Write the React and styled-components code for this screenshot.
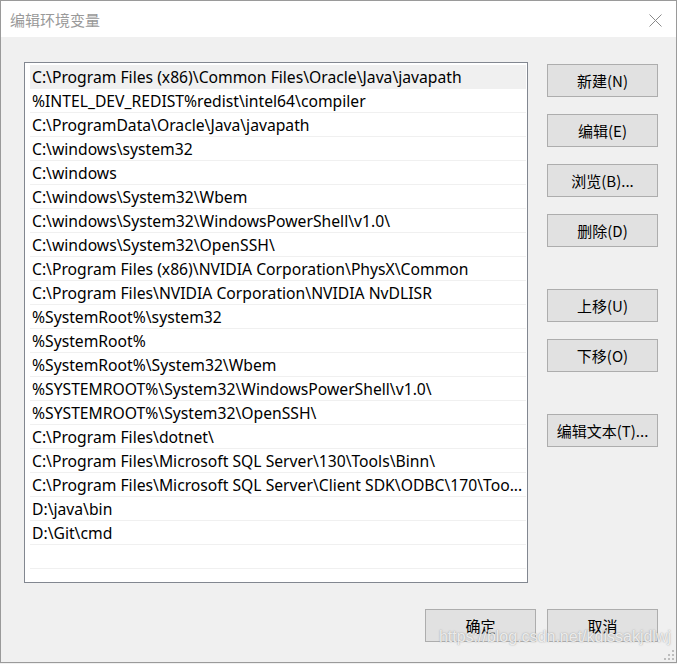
import React from "react";
import styled, { createGlobalStyle } from "styled-components";

const Global = createGlobalStyle`
  html, body { margin: 0; padding: 0; background: #f0f0f0; }
  body { font-family: "Noto Sans", "Noto Sans CJK SC", sans-serif; }
  * { box-sizing: border-box; }
`;

const Window = styled.div`
  position: relative;
  width: 677px;
  height: 663px;
  border: 1px solid #9a9a9a;
  background: #f0f0f0;
  display: flex;
  flex-direction: column;
  overflow: hidden;
`;

const TitleBar = styled.div`
  height: 36px;
  background: #ffffff;
  display: flex;
  align-items: center;
  justify-content: space-between;
  padding: 0 14px 0 9px;
  flex-shrink: 0;
`;

const Title = styled.div`
  font-family: "Noto Sans CJK SC", sans-serif;
  font-size: 15px;
  color: #999999;
  margin-top: 1px;
`;

const CloseIcon = styled.svg`
  width: 13px;
  height: 13px;
  display: block;
  margin-top: 2px;
`;

const Body = styled.div`
  flex: 1;
  display: grid;
  grid-template-columns: 504px 111px;
  grid-template-rows: 521px 33px;
  column-gap: 19px;
  row-gap: 26px;
  padding: 25px 0 0 23px;
`;

const ListBox = styled.div`
  border: 1px solid #828790;
  background: #ffffff;
  padding: 2px 1px 0 5px;
  overflow: hidden;
`;

const Row = styled.div`
  height: 24px;
  line-height: 24px;
  border-bottom: 1px solid #f0f0f0;
  background: ${(p) => (p.$selected ? "#f0f0f0" : "transparent")};
  padding-left: 2px;
  font-family: "Noto Sans", "Noto Sans CJK SC", sans-serif;
  font-size: 15.7px;
  color: #000000;
  white-space: nowrap;
  overflow: hidden;
`;

const SideColumn = styled.div`
  display: flex;
  flex-direction: column;
  padding-top: 2px;
`;

const Group = styled.div`
  display: flex;
  flex-direction: column;
  gap: 17px;
  margin-bottom: ${(p) => p.$after || 0}px;
`;

const Button = styled.button`
  width: 111px;
  height: 33px;
  background: #e1e1e1;
  border: 1px solid #adadad;
  border-radius: 0;
  padding: 0;
  font-family: "Noto Sans CJK SC", sans-serif;
  font-size: 15px;
  color: #000000;
  display: flex;
  align-items: center;
  justify-content: center;
`;

const Footer = styled.div`
  grid-column: 1 / span 2;
  display: flex;
  justify-content: flex-end;
  gap: 11px;
`;

const Watermark = styled.div`
  position: absolute;
  right: 5px;
  bottom: 16px;
  font-family: "Liberation Sans", Arial, sans-serif;
  font-size: 16px;
  color: rgba(255, 255, 255, 0.8);
  text-shadow: 0 0 1px rgba(120, 120, 120, 0.55), 0 0 2px rgba(150, 150, 150, 0.45);
  pointer-events: none;
`;

const Grip = styled.svg`
  position: absolute;
  right: 1px;
  bottom: 1px;
  width: 11px;
  height: 11px;
`;

const paths = [
  "C:\\Program Files (x86)\\Common Files\\Oracle\\Java\\javapath",
  "%INTEL_DEV_REDIST%redist\\intel64\\compiler",
  "C:\\ProgramData\\Oracle\\Java\\javapath",
  "C:\\windows\\system32",
  "C:\\windows",
  "C:\\windows\\System32\\Wbem",
  "C:\\windows\\System32\\WindowsPowerShell\\v1.0\\",
  "C:\\windows\\System32\\OpenSSH\\",
  "C:\\Program Files (x86)\\NVIDIA Corporation\\PhysX\\Common",
  "C:\\Program Files\\NVIDIA Corporation\\NVIDIA NvDLISR",
  "%SystemRoot%\\system32",
  "%SystemRoot%",
  "%SystemRoot%\\System32\\Wbem",
  "%SYSTEMROOT%\\System32\\WindowsPowerShell\\v1.0\\",
  "%SYSTEMROOT%\\System32\\OpenSSH\\",
  "C:\\Program Files\\dotnet\\",
  "C:\\Program Files\\Microsoft SQL Server\\130\\Tools\\Binn\\",
  "C:\\Program Files\\Microsoft SQL Server\\Client SDK\\ODBC\\170\\Too...",
  "D:\\java\\bin",
  "D:\\Git\\cmd",
  "",
  "",
];

export default function App() {
  return (
    <>
      <Global />
      <Window>
        <TitleBar>
          <Title>编辑环境变量</Title>
          <CloseIcon viewBox="0 0 13 13">
            <path d="M0.5 0.5 L12.5 12.5 M12.5 0.5 L0.5 12.5" stroke="#8a8a8a" strokeWidth="1" fill="none" />
          </CloseIcon>
        </TitleBar>
        <Body>
          <ListBox>
            {paths.map((p, i) => (
              <Row key={i} $selected={i === 0}>
                {p}
              </Row>
            ))}
          </ListBox>
          <SideColumn>
            <Group $after={42}>
              <Button>新建(N)</Button>
              <Button>编辑(E)</Button>
              <Button>浏览(B)...</Button>
              <Button>删除(D)</Button>
            </Group>
            <Group $after={42}>
              <Button>上移(U)</Button>
              <Button>下移(O)</Button>
            </Group>
            <Group>
              <Button>编辑文本(T)...</Button>
            </Group>
          </SideColumn>
          <Footer>
            <Button>确定</Button>
            <Button>取消</Button>
          </Footer>
        </Body>
        <Watermark>https://blog.csdn.net/kdissakjdlwj</Watermark>
        <Grip viewBox="0 0 11 11">
          <g fill="#bdbdbd">
            <rect x="8" y="0" width="2" height="2" />
            <rect x="4" y="4" width="2" height="2" />
            <rect x="8" y="4" width="2" height="2" />
            <rect x="0" y="8" width="2" height="2" />
            <rect x="4" y="8" width="2" height="2" />
            <rect x="8" y="8" width="2" height="2" />
          </g>
        </Grip>
      </Window>
    </>
  );
}
